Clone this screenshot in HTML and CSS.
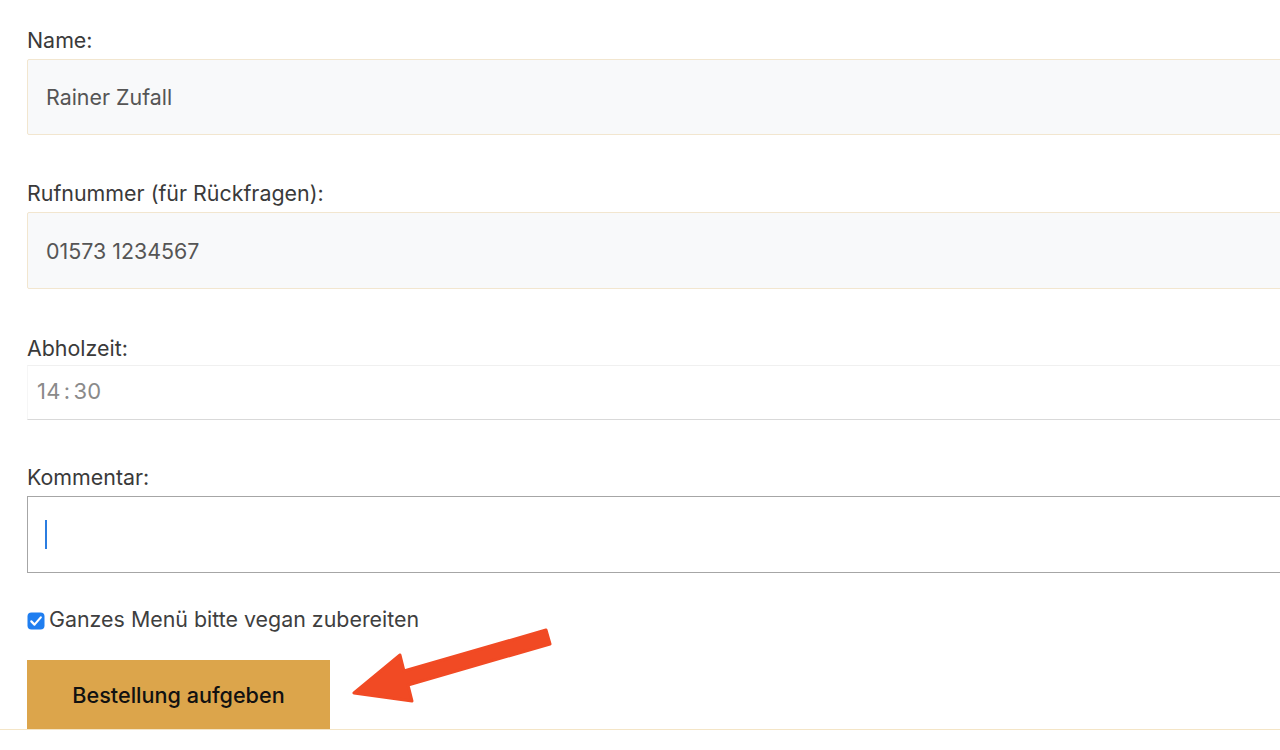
FILE: index.html
```html
<!DOCTYPE html>
<html lang="de">
<head>
<meta charset="utf-8">
<title>Bestellung</title>
<link rel="stylesheet" href="styles.css">
</head>
<body>
<form class="order">
  <div class="field f-name">
    <label class="lbl">Name:</label>
    <div class="box text">Rainer Zufall</div>
  </div>
  <div class="field f-phone">
    <label class="lbl">Rufnummer (für Rückfragen):</label>
    <div class="box text">01573 1234567</div>
  </div>
  <div class="field f-time">
    <label class="lbl">Abholzeit:</label>
    <div class="box time">14<span class="colon">:</span>30</div>
  </div>
  <div class="field f-comment">
    <label class="lbl">Kommentar:</label>
    <div class="box comment"><span class="caret"></span></div>
  </div>
  <label class="check">
    <span class="cb"><svg viewBox="0 0 18 18" width="18" height="18"><rect x="0.5" y="0.5" width="17" height="17" rx="4" fill="#1f7ef0"/><path d="M4.3 9.4 L7.5 12.6 L13.8 5.4" fill="none" stroke="#fff" stroke-width="2.2" stroke-linecap="round" stroke-linejoin="round"/></svg></span>
    <span class="check-text">Ganzes Menü bitte vegan zubereiten</span>
  </label>
  <div class="actions">
    <button type="button" class="submit">Bestellung aufgeben</button>
  </div>
</form>
<div class="rule"></div>
<svg class="arrow" width="1280" height="750" viewBox="0 0 1280 750">
  <polygon points="354,693 412,701 408,685 550,644 546,630 404,671 400,655" fill="#f14a24" stroke="#f14a24" stroke-width="3" stroke-linejoin="round"/>
</svg>
</body>
</html>
```

FILE: styles.css
```css
html, body {
  margin: 0;
  padding: 0;
  background: #ffffff;
  overflow: hidden;
  width: 1280px;
  height: 750px;
}

body {
  font-family: Inter, "Liberation Sans", sans-serif;
  color: #333333;
  position: relative;
}

.order {
  padding: 28px 0 0 27px;
  display: flex;
  flex-direction: column;
}

.field {
  display: flex;
  flex-direction: column;
}

.lbl {
  font-size: 21.4px;
  line-height: 25px;
  color: #3a3a3a;
  margin-bottom: 6px;
}

.box {
  width: 1300px;
  box-sizing: border-box;
  display: flex;
  align-items: center;
}

.text {
  height: 77px;
  background: #f8f9fa;
  border: 1.5px solid #f2e6cf;
  border-radius: 2px;
  padding-left: 18px;
  font-size: 21.4px;
  color: #555555;
}

.f-name .text { height: 76px; }

.f-name { margin-bottom: 46px; }
.f-phone { margin-bottom: 47px; }

.f-time .lbl { margin-bottom: 4px; }

.time {
  height: 55px;
  border-top: 1px solid #f0f0f0;
  border-bottom: 1.5px solid #d9d9d9;
  border-left: 1px solid #f6f6f6;
  padding-left: 9px;
  padding-bottom: 3px;
  font-size: 22px;
  color: #8a8a8a;
  letter-spacing: 0.3px;
}

.colon { margin: 0 3px; }

.f-time { margin-bottom: 45px; }

.comment {
  height: 77px;
  border: 1.5px solid #a6a6a6;
  background: #ffffff;
  padding-left: 17px;
}

.caret {
  display: block;
  width: 2px;
  height: 29px;
  background: #2b7de0;
  margin-top: 0;
}

.f-comment { margin-bottom: 34px; }

.check {
  display: flex;
  align-items: center;
  height: 24px;
  gap: 4px;
}

.cb {
  display: block;
  width: 18px;
  height: 18px;
  margin-top: 4px;
}

.cb svg { display: block; }

.check-text {
  font-size: 21.4px;
  color: #3f3f3f;
}

.actions {
  margin-top: 29px;
}

.submit {
  width: 303px;
  height: 69px;
  border: none;
  border-radius: 0;
  background: #dca54b;
  color: #111111;
  font-family: Inter, "Liberation Sans", sans-serif;
  font-size: 21.6px;
  font-weight: 500;
  padding: 0;
  margin: 0;
}

.rule {
  height: 1px;
  background: #f4e5c6;
  width: 100%;
}

.arrow {
  position: absolute;
  left: 0;
  top: 0;
  pointer-events: none;
}
```
